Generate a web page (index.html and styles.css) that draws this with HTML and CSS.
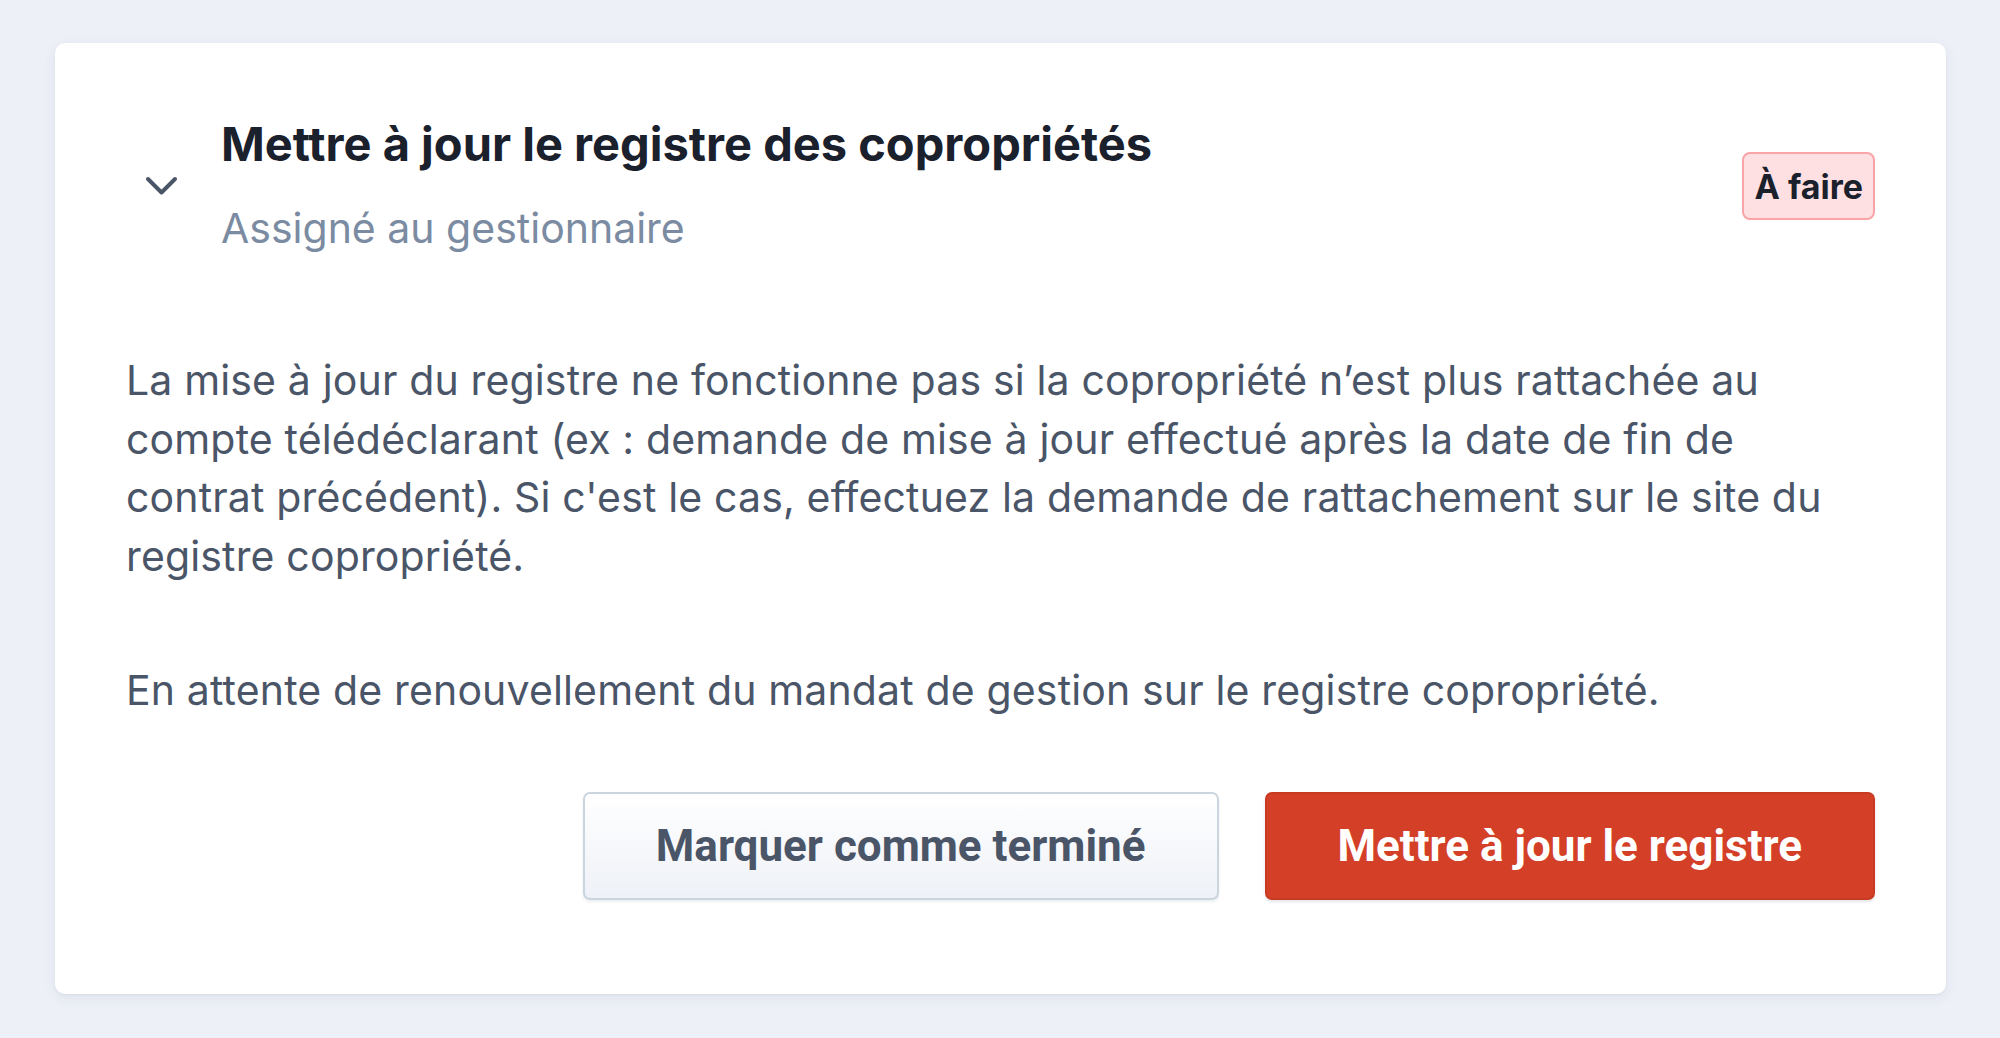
FILE: index.html
```html
<!DOCTYPE html>
<html lang="fr">
<head>
<meta charset="utf-8">
<title>Tâche</title>
<link rel="stylesheet" href="styles.css">
</head>
<body>
<div class="card">
  <div class="header">
    <svg class="chevron" width="33" height="20" viewBox="0 0 33 20" aria-hidden="true">
      <path d="M3 3 L16.5 16.5 L30 3" fill="none" stroke="#4a5568" stroke-width="4" stroke-linecap="round" stroke-linejoin="round"/>
    </svg>
    <div class="titles">
      <h2 class="title">Mettre à jour le registre des copropriétés</h2>
      <p class="subtitle">Assigné au gestionnaire</p>
    </div>
    <span class="badge">À faire</span>
  </div>
  <div class="content">
    <p class="text">La mise à jour du registre ne fonctionne pas si la copropriété n’est plus rattachée au compte télédéclarant (ex : demande de mise à jour effectué après la date de fin de contrat précédent). Si c'est le cas, effectuez la demande de rattachement sur le site du registre copropriété.</p>
    <p class="text text-second">En attente de renouvellement du mandat de gestion sur le registre copropriété.</p>
  </div>
  <div class="actions">
    <button class="btn btn-secondary" type="button">Marquer comme terminé</button>
    <button class="btn btn-primary" type="button">Mettre à jour le registre</button>
  </div>
</div>
</body>
</html>
```
FILE: styles.css
```css
html, body {
  margin: 0;
  padding: 0;
}
body {
  background: #edf0f7;
  font-family: Inter, "Noto Sans", sans-serif;
  width: 2000px;
  height: 1038px;
  overflow: hidden;
}
.card {
  box-sizing: border-box;
  margin: 43px 0 0 55px;
  width: 1891px;
  background: #ffffff;
  border-radius: 10px;
  box-shadow: 0 4px 14px rgba(45, 60, 100, 0.07), 0 1px 3px rgba(45, 60, 100, 0.05);
  padding: 74px 71px 94px 71px;
}
.header {
  display: flex;
  align-items: center;
}
.chevron {
  flex: none;
  margin-left: 19px;
  margin-right: 43px;
  margin-top: 0;
}
.titles {
  flex: 1;
}
.title {
  margin: 0;
  font-size: 47px;
  line-height: 54px;
  font-weight: 700;
  color: #1a202c;
}
.subtitle {
  margin: 30px 0 0 0;
  font-size: 41px;
  line-height: 54px;
  font-weight: 400;
  color: #7a8ba2;
}
.badge {
  flex: none;
  box-sizing: border-box;
  height: 68px;
  padding: 0 10px;
  display: flex;
  align-items: center;
  background: #fee0e2;
  border: 2px solid #fba4a8;
  border-radius: 8px;
  font-size: 34px;
  font-weight: 700;
  color: #1a202c;
}
.content {
  margin-top: 96px;
}
.text {
  margin: 0;
  font-size: 41px;
  line-height: 58.7px;
  letter-spacing: 0.15px;
  color: #4a5568;
}
.text-second {
  margin-top: 75px;
}
.actions {
  display: flex;
  justify-content: flex-end;
  gap: 46px;
  margin-top: 72px;
}
.btn {
  box-sizing: border-box;
  height: 108px;
  padding: 0 71px;
  font-family: Roboto, "Liberation Sans", sans-serif;
  font-size: 44px;
  font-weight: 700;
  border-radius: 7px;
  cursor: pointer;
}
.btn-secondary {
  background: linear-gradient(#ffffff, #eef1f7);
  border: 2px solid #cbd5e0;
  color: #4a5568;
  box-shadow: 0 2px 3px rgba(30, 40, 70, 0.08);
}
.btn-primary {
  background: #d44027;
  border: 2px solid #c93a22;
  color: #ffffff;
  box-shadow: 0 2px 3px rgba(30, 40, 70, 0.12);
}
```
